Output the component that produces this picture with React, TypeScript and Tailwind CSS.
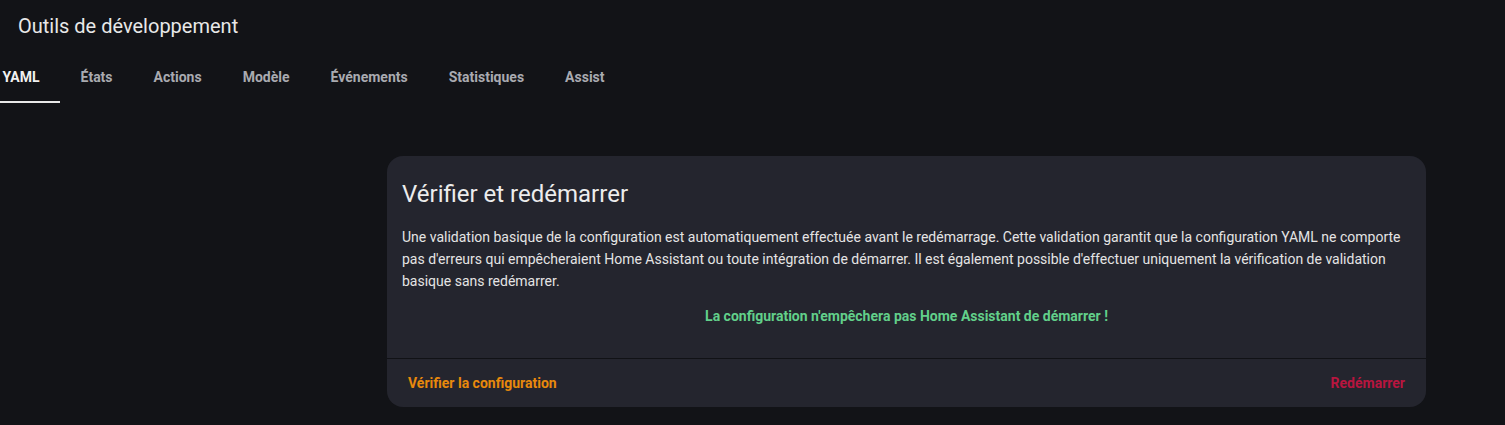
const tabs = ["YAML", "États", "Actions", "Modèle", "Événements", "Statistiques", "Assist"];

export default function App() {
  return (
    <div
      className="w-[1505px] h-[425px] bg-[#121317] text-[#e1e1e1] overflow-hidden"
      style={{ fontFamily: "Roboto, 'Noto Sans', sans-serif" }}
    >
      <header className="h-[52px] flex items-center pl-[18px]">
        <h1 className="text-[20px] font-normal text-[#e8e8e8]">Outils de développement</h1>
      </header>

      <nav className="flex h-[51px] ml-[-18px]">
        {tabs.map((t, i) => (
          <div
            key={t}
            className={`relative flex items-center px-[20.5px] text-[14px] font-bold ${
              i === 0 ? "text-[#f1f1f1]" : "text-[#a9aab0]"
            }`}
          >
            {t}
            {i === 0 && <span className="absolute left-[18px] right-0 bottom-0 h-[2px] bg-[#e8e8e8]" />}
          </div>
        ))}
      </nav>

      <main className="pt-[53px] pl-[387px]">
        <section className="w-[1039px] bg-[#24252e] rounded-[16px] overflow-hidden">
          <div className="px-[15px] pt-[22px] pb-[31px]">
            <h2 className="text-[24px] leading-[32px] font-normal text-[#ececec]">Vérifier et redémarrer</h2>
            <p className="mt-[16px] text-[14px] leading-[22px] text-[#e4e4e4]">
              Une validation basique de la configuration est automatiquement effectuée avant le redémarrage. Cette
              validation garantit que la configuration YAML ne comporte pas d'erreurs qui empêcheraient Home Assistant
              ou toute intégration de démarrer. Il est également possible d'effectuer uniquement la vérification de
              validation basique sans redémarrer.
            </p>
            <p className="mt-[14px] text-center text-[14px] font-bold text-[#62d08a]">
              La configuration n'empêchera pas Home Assistant de démarrer !
            </p>
          </div>
          <div className="h-px bg-[#111216]" />
          <div className="flex items-center justify-between h-[48px] px-[21px]">
            <button className="text-[14px] font-bold text-[#e8890c]">Vérifier la configuration</button>
            <button className="text-[14px] font-bold text-[#b8153f]">Redémarrer</button>
          </div>
        </section>
      </main>
    </div>
  );
}
